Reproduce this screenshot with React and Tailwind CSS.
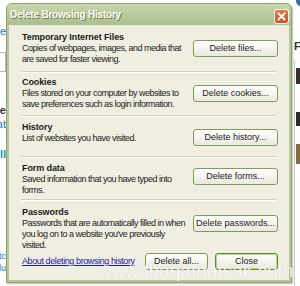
import React from "react";

const sections = [
  {
    title: "Temporary Internet Files",
    lines: ["Copies of webpages, images, and media that", "are saved for faster viewing."],
    button: "Delete files...",
    box: "h-[46px] pt-[7px]",
    btnTop: "mt-[8px]",
  },
  {
    title: "Cookies",
    lines: ["Files stored on your computer by websites to", "save preferences such as login information."],
    button: "Delete cookies...",
    box: "h-[42px] pt-[4px]",
    btnTop: "mt-[8px]",
  },
  {
    title: "History",
    lines: ["List of websites you have visited."],
    button: "Delete history...",
    box: "h-[39px] pt-[5px]",
    btnTop: "mt-[7px]",
  },
  {
    title: "Form data",
    lines: ["Saved information that you have typed into", "forms."],
    button: "Delete forms...",
    box: "h-[41px] pt-[5px]",
    btnTop: "mt-[5px]",
  },
  {
    title: "Passwords",
    lines: [
      "Passwords that are automatically filled in when",
      "you log on to a website you've previously",
      "visited.",
    ],
    button: "Delete passwords...",
    box: "h-[50px] pt-[6px]",
    btnTop: "mt-[8px]",
  },
];

function XpButton({ children, primary, className = "" }) {
  return (
    <button
      className={
        "flex h-[17px] shrink-0 items-center justify-center rounded-[3px] border bg-linear-to-b from-white to-[#ebe9dc] text-[9px] leading-none text-[#1b1b1b] " +
        (primary
          ? "border-[#5e8a35] shadow-[inset_0_0_0_1px_#b5d58a] "
          : "border-[#7f9a5c] ") +
        className
      }
    >
      {children}
    </button>
  );
}

function Section({ s, last }) {
  return (
    <>
      <div className={"flex items-start " + s.box}>
        <div className="flex-1 pl-[1px] text-[9px] leading-[11px] tracking-[-0.5px] text-[#1b1b1b]">
          <div className="font-bold tracking-[-0.1px]">{s.title}</div>
          {s.lines.map((l) => (
            <div key={l} className="whitespace-nowrap">
              {l}
            </div>
          ))}
        </div>
        <XpButton className={"mr-[-1px] w-[85px] " + s.btnTop}>{s.button}</XpButton>
      </div>
      {!last && <div className="h-[2px] border-t border-[#d2d0bf] border-b border-b-white" />}
    </>
  );
}

function Dialog() {
  return (
    <div className="mt-[3px] flex h-[280px] w-[286px] shrink-0 flex-col rounded-t-[6px] border border-[#8ea46b] bg-[#b5c697] shadow-[1px_1px_2px_rgba(0,0,0,0.25)]">
      <div className="flex h-[21px] shrink-0 items-center justify-between rounded-t-[5px] bg-linear-to-b from-[#c8d5ae] to-[#adbf8c] pl-[3px] pr-[2px]">
        <span className="text-[10px] font-bold tracking-[-0.2px] text-white [text-shadow:1px_1px_0_#6f8150]">
          Delete Browsing History
        </span>
        <div className="mt-[3px] flex h-[15px] w-[15px] items-center justify-center rounded-[3px] border border-white bg-linear-to-b from-[#e07a50] to-[#c9532c]">
          <svg width="9" height="9" viewBox="0 0 9 9">
            <path d="M1.5 1.5 L7.5 7.5 M7.5 1.5 L1.5 7.5" stroke="white" strokeWidth="1.8" strokeLinecap="square" />
          </svg>
        </div>
      </div>
      <div className="mx-[2px] mb-[2px] flex flex-1 flex-col bg-[#efeee1] px-[12px]">
        {sections.map((s, i) => (
          <Section key={s.title} s={s} last={i === sections.length - 1} />
        ))}
        <div className="mt-[2px] flex items-center">
          <a className="flex-1 pl-[1px] text-[9px] tracking-[-0.4px] text-[#1a1aa6] underline">
            About deleting browsing history
          </a>
          <XpButton className="w-[63px]">Delete all...</XpButton>
          <XpButton primary className="ml-[7px] mr-[-1px] w-[63px]">
            Close
          </XpButton>
        </div>
      </div>
    </div>
  );
}

function PageLeft() {
  return (
    <div className="flex w-[6px] shrink-0 flex-col items-end overflow-hidden text-[11px] leading-[12px] text-[#2a6fb5]">
      <div className="mt-[25px] whitespace-nowrap">Free</div>
      <div className="mt-[15px] h-[20px] w-[40px] shrink-0 border border-[#b9b9b9] bg-white" />
      <div className="mt-[32px] whitespace-nowrap font-bold text-[#333]">Se</div>
      <div className="mt-[2px] whitespace-nowrap">at</div>
      <div className="mt-[18px] whitespace-nowrap font-bold text-[#1f8fc8]">ll</div>
      <div className="mt-[90px] whitespace-nowrap text-[9px]">etc</div>
      <div className="whitespace-nowrap text-[9px]">du</div>
    </div>
  );
}

function PageRight() {
  return (
    <div className="flex w-[8px] shrink-0 flex-col overflow-hidden pl-[2px]">
      <div className="ml-[2px] h-[6px] w-[10px] rounded-b-full bg-[#2d6fa8]" />
      <div className="mt-[34px] text-[11px] font-bold leading-[12px] text-[#333]">F</div>
      <div className="mt-[8px] flex-1 border-l border-[#c9c9c9] pl-[1px]">
        <div className="mt-[8px] h-[16px] w-[8px] bg-[#3b2f2a]" />
        <div className="mt-[28px] h-[14px] w-[8px] bg-[#2f2a26]" />
        <div className="mt-[18px] h-[20px] w-[8px] bg-[#8a6a3a]" />
      </div>
    </div>
  );
}

export default function App() {
  return (
    <div className="relative flex h-[286px] w-[300px] overflow-hidden bg-white font-['Liberation_Sans',sans-serif]">
      <PageLeft />
      <Dialog />
      <PageRight />
      <div className="pointer-events-none absolute left-[98px] top-[259px] whitespace-nowrap text-[19px] leading-[24px] text-white/90 [text-shadow:0_0_1px_rgba(0,0,0,0.2)]">
        www.thaqafnafsak.com
      </div>
    </div>
  );
}
